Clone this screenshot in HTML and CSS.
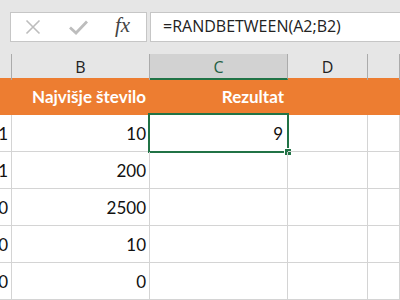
FILE: index.html
```html
<!DOCTYPE html>
<html lang="sl">
<head>
<meta charset="utf-8">
<title>Excel RANDBETWEEN</title>
<link rel="stylesheet" href="styles.css">
</head>
<body>
<div class="app">
  <div class="fbar">
    <div class="fbtns">
      <svg class="ic-x" width="16" height="16" viewBox="0 0 16 16"><path d="M1.5 1.5 L14.5 14.5 M14.5 1.5 L1.5 14.5" fill="none" stroke="#bdbdbd" stroke-width="1.6"/></svg>
      <svg class="ic-check" width="19" height="15" viewBox="0 0 19 15"><path d="M1 7.5 L7 13 L18 1.5" fill="none" stroke="#bdbdbd" stroke-width="2.8"/></svg>
      <span class="fx">fx</span>
    </div>
    <div class="finput">=RANDBETWEEN(A2;B2)</div>
  </div>
  <div class="sheet">
    <div class="row colhead">
      <div class="hc"></div>
      <div class="hc">B</div>
      <div class="hc sel">C</div>
      <div class="hc">D</div>
      <div class="hc"></div>
    </div>
    <div class="row title">
      <div class="tc"></div>
      <div class="tc">Najvišje število</div>
      <div class="tc">Rezultat</div>
      <div class="tc"></div>
      <div class="tc"></div>
    </div>
    <div class="row data">
      <div class="dc">1</div><div class="dc">10</div><div class="dc active">9<span class="selbox"></span><span class="handle"></span></div><div class="dc"></div><div class="dc"></div>
    </div>
    <div class="row data">
      <div class="dc">1</div><div class="dc">200</div><div class="dc"></div><div class="dc"></div><div class="dc"></div>
    </div>
    <div class="row data">
      <div class="dc">0</div><div class="dc">2500</div><div class="dc"></div><div class="dc"></div><div class="dc"></div>
    </div>
    <div class="row data">
      <div class="dc">0</div><div class="dc">10</div><div class="dc"></div><div class="dc"></div><div class="dc"></div>
    </div>
    <div class="row data">
      <div class="dc">0</div><div class="dc">0</div><div class="dc"></div><div class="dc"></div><div class="dc"></div>
    </div>
  </div>
</div>
</body>
</html>
```
FILE: styles.css
```css
* { box-sizing: border-box; }
html, body { margin: 0; padding: 0; }
body {
  width: 400px;
  height: 300px;
  overflow: hidden;
  background: #e6e6e6;
}
.app { width: 400px; height: 300px; overflow: hidden; }

.fbar {
  height: 54px;
  padding: 12px 0 0 10px;
  display: flex;
  gap: 3px;
  align-items: flex-start;
}
.fbtns {
  width: 137px;
  height: 30px;
  background: #fff;
  border: 1px solid #c6c6c6;
  display: flex;
  align-items: center;
}
.ic-x { margin-left: 14px; }
.ic-check { margin-left: 28px; margin-top: 1px; }
.fx {
  margin-left: 27px;
  font-family: "Liberation Serif", serif;
  font-style: italic;
  font-size: 21px;
  color: #444;
  line-height: 1;
  margin-top: -3px;
}
.finput {
  flex: 1;
  height: 30px;
  margin-right: -4px;
  background: #fff;
  border: 1px solid #c6c6c6;
  font-family: "Open Sans", sans-serif;
  font-size: 16px;
  color: #222;
  line-height: 27px;
  padding-left: 12px;
  white-space: nowrap;
}

.sheet { background: #fff; }
.row {
  display: grid;
  grid-template-columns: 12px 138px 138px 80px 1fr;
}
.colhead { height: 24px; background: #e6e6e6; }
.hc {
  border-right: 1px solid #ababab;
  font-family: "Open Sans", sans-serif;
  font-size: 16px;
  color: #222;
  display: flex;
  align-items: center;
  justify-content: center;
}
.hc.sel {
  background: #d2d2d2;
  border-bottom: 2px solid #217346;
  color: #1f5f44;
  padding-top: 2px;
}
.title { height: 37px; background: #ed7d31; }
.tc {
  display: flex;
  align-items: center;
  justify-content: flex-end;
  padding-right: 4px;
  font-family: Lato, sans-serif;
  font-weight: bold;
  font-size: 17px;
  color: #fff;
  white-space: nowrap;
}
.data { height: 37px; }
.dc {
  position: relative;
  border-right: 1px solid #d4d4d4;
  border-bottom: 1px solid #d4d4d4;
  display: flex;
  align-items: center;
  justify-content: flex-end;
  padding-right: 3px;
  font-family: Lato, sans-serif;
  font-size: 17px;
  color: #111;
  white-space: nowrap;
  overflow: hidden;
}
.dc.active { overflow: visible; padding-right: 4px; }
.selbox {
  position: absolute;
  left: -2px;
  top: -2px;
  right: -2px;
  bottom: -2px;
  border: 2px solid #217346;
}
.handle {
  position: absolute;
  right: -4px;
  bottom: -4px;
  width: 6px;
  height: 6px;
  background: #217346;
  box-shadow: 0 0 0 1px #fff;
}
```
